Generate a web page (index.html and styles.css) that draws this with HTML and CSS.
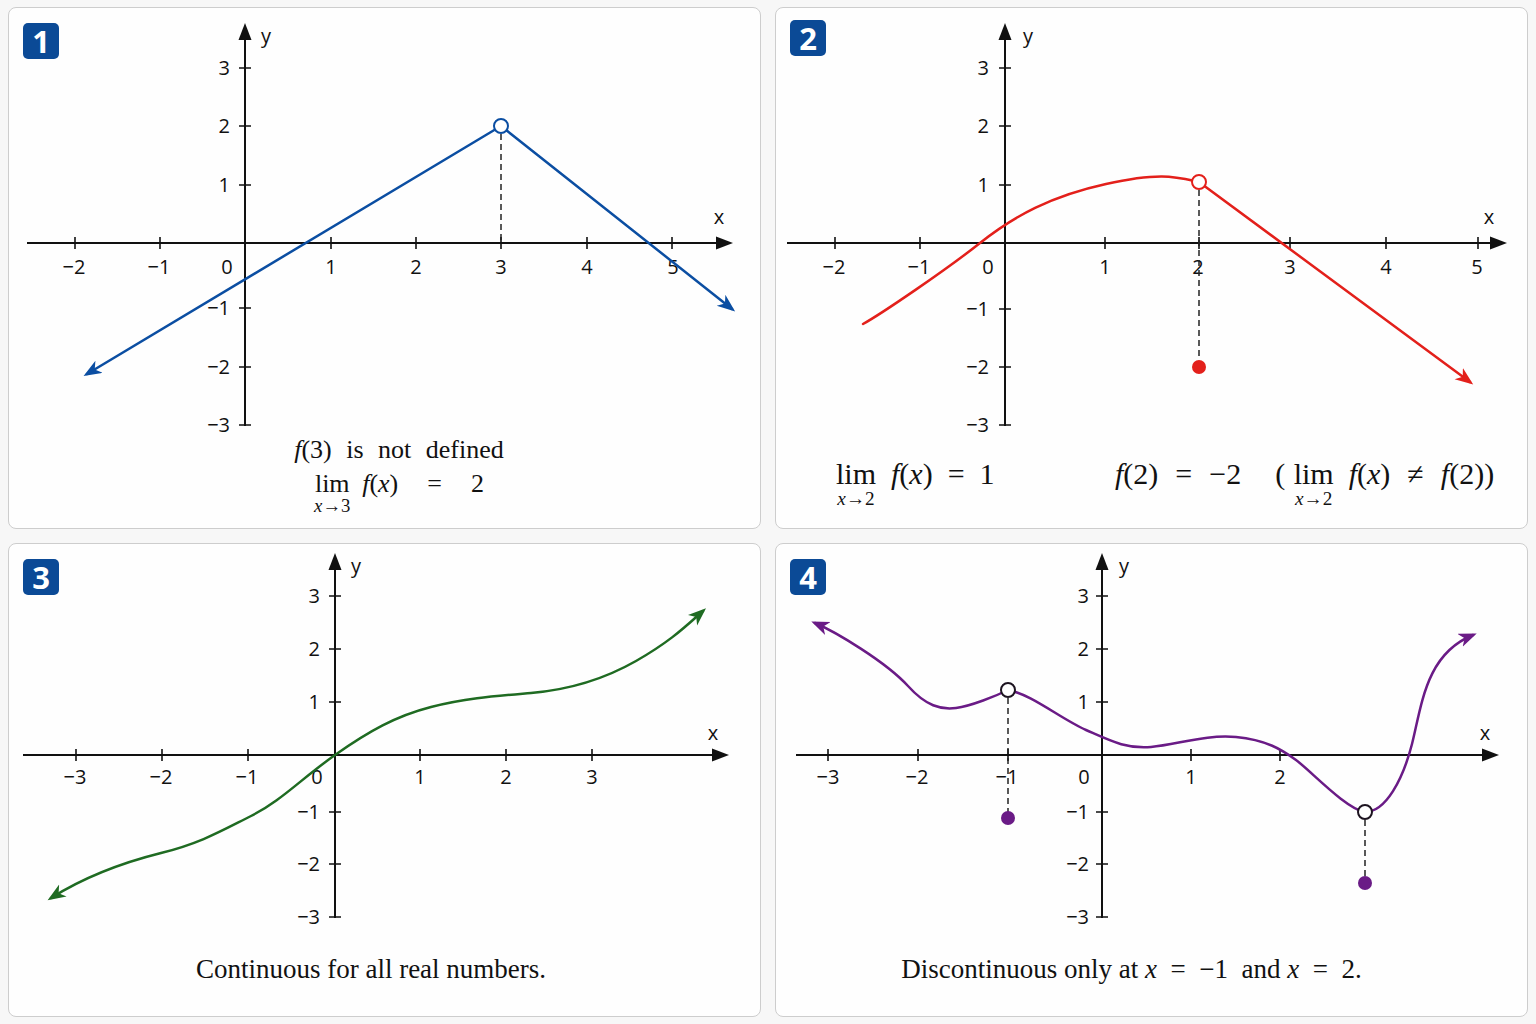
FILE: index.html
```html
<!DOCTYPE html>
<html lang="en">
<head>
<meta charset="utf-8">
<title>Continuity and limits</title>
<link rel="stylesheet" href="styles.css">
</head>
<body>
<div class="grid">

  <!-- Panel 1 -->
  <section class="panel">
    <div class="badge">1</div>
    <svg class="plot" width="751" height="432" viewBox="0 0 751 432">
      <defs>
        <marker id="ab" markerUnits="userSpaceOnUse" markerWidth="20" markerHeight="16" refX="14" refY="7" orient="auto-start-reverse">
          <path d="M0,0 L18,7 L0,14 L5,7 z" fill="#0b4ea2"/>
        </marker>
      </defs>
      <line class="axis" x1="18" y1="235" x2="712" y2="235"/>
      <polygon class="ah" points="724,235 707,228.5 707,241.5"/>
      <line class="axis" x1="236" y1="418" x2="236" y2="28"/>
      <polygon class="ah" points="236,15 229.5,32 242.5,32"/>
      <path class="tick" d="M230,60h12M230,118h12M230,177h12M230,300h12M230,359h12M230,417h12"/>
      <path class="tick" d="M66,229v12M151,229v12M322,229v12M407,229v12M492,229v12M578,229v12M663,229v12"/>
      <g class="tl tl1">
        <text x="221" y="67" text-anchor="end">3</text>
        <text x="221" y="125" text-anchor="end">2</text>
        <text x="221" y="184" text-anchor="end">1</text>
        <text x="221" y="307" text-anchor="end">−1</text>
        <text x="221" y="366" text-anchor="end">−2</text>
        <text x="221" y="424" text-anchor="end">−3</text>
        <text x="65" y="266" text-anchor="middle">−2</text>
        <text x="150" y="266" text-anchor="middle">−1</text>
        <text x="218" y="266" text-anchor="middle">0</text>
        <text x="322" y="266" text-anchor="middle">1</text>
        <text x="407" y="266" text-anchor="middle">2</text>
        <text x="492" y="266" text-anchor="middle">3</text>
        <text x="578" y="266" text-anchor="middle">4</text>
        <text x="664" y="266" text-anchor="middle">5</text>
        <text x="710" y="216" text-anchor="middle">x</text>
        <text x="257" y="35" text-anchor="middle">y</text>
      </g>
      <line class="dash" x1="492" y1="126" x2="492" y2="235"/>
      <path class="curve blue" d="M78,366 L492,118 L723,301" marker-start="url(#ab)" marker-end="url(#ab)"/>
      <circle class="hole" cx="492" cy="118" r="7" stroke="#0b4ea2"/>
    </svg>
    <div class="cap cap1">
      <div><i>f</i>(3) is not defined</div>
      <div><span class="lim"><span>lim</span><span class="sub"><i>x</i>→3</span></span><i>f</i>(<i>x</i>)&nbsp; = &nbsp;2</div>
    </div>
  </section>

  <!-- Panel 2 -->
  <section class="panel">
    <div class="badge b2">2</div>
    <svg class="plot" width="751" height="432" viewBox="0 0 751 432">
      <defs>
        <marker id="ar" markerUnits="userSpaceOnUse" markerWidth="20" markerHeight="16" refX="14" refY="7" orient="auto-start-reverse">
          <path d="M0,0 L18,7 L0,14 L5,7 z" fill="#e3201b"/>
        </marker>
      </defs>
      <line class="axis" x1="11" y1="235" x2="719" y2="235"/>
      <polygon class="ah" points="731,235 714,228.5 714,241.5"/>
      <line class="axis" x1="229" y1="418" x2="229" y2="28"/>
      <polygon class="ah" points="229,15 222.5,32 235.5,32"/>
      <path class="tick" d="M223,60h12M223,118h12M223,177h12M223,301h12M223,359h12M223,417h12"/>
      <path class="tick" d="M59,229v12M144,229v12M329,229v12M423,229v12M514,229v12M610,229v12M702,229v12"/>
      <g class="tl tlc">
        <text x="213" y="67" text-anchor="end">3</text>
        <text x="213" y="125" text-anchor="end">2</text>
        <text x="213" y="184" text-anchor="end">1</text>
        <text x="213" y="308" text-anchor="end">−1</text>
        <text x="213" y="366" text-anchor="end">−2</text>
        <text x="213" y="424" text-anchor="end">−3</text>
        <text x="58" y="266" text-anchor="middle">−2</text>
        <text x="143" y="266" text-anchor="middle">−1</text>
        <text x="212" y="266" text-anchor="middle">0</text>
        <text x="329" y="266" text-anchor="middle">1</text>
        <text x="422" y="266" text-anchor="middle">2</text>
        <text x="514" y="266" text-anchor="middle">3</text>
        <text x="610" y="266" text-anchor="middle">4</text>
        <text x="701" y="266" text-anchor="middle">5</text>
        <text x="713" y="216" text-anchor="middle">x</text>
        <text x="252" y="35" text-anchor="middle">y</text>
      </g>
      <line class="dash" x1="423" y1="182" x2="423" y2="352"/>
      <path class="curve red" d="M87,316 C105,306 170,262 204,235 S275,188 330,176 S400,169 423,174"/>
      <path class="curve red" d="M423,174 L694,374" marker-end="url(#ar)"/>
      <circle class="hole" cx="423" cy="174" r="7" stroke="#e3201b"/>
      <circle cx="423" cy="359" r="7" fill="#e3201b"/>
    </svg>
    <div class="cap cap2">
      <div class="c2a"><span class="lim"><span>lim</span><span class="sub"><i>x</i>→2</span></span><i>f</i>(<i>x</i>)&nbsp; = &nbsp;1</div>
      <div class="c2b"><i>f</i>(2)&nbsp; = &nbsp;−2&nbsp;&nbsp;&nbsp; (&nbsp;<span class="lim"><span>lim</span><span class="sub"><i>x</i>→2</span></span><i>f</i>(<i>x</i>)&nbsp; ≠ &nbsp;<i>f</i>(2))</div>
    </div>
  </section>

  <!-- Panel 3 -->
  <section class="panel">
    <div class="badge">3</div>
    <svg class="plot" width="751" height="386" viewBox="0 0 751 386">
      <defs>
        <marker id="ag" markerUnits="userSpaceOnUse" markerWidth="20" markerHeight="16" refX="14" refY="7" orient="auto-start-reverse">
          <path d="M0,0 L18,7 L0,14 L5,7 z" fill="#1f6b22"/>
        </marker>
      </defs>
      <line class="axis" x1="14" y1="211" x2="708" y2="211"/>
      <polygon class="ah" points="720,211 703,204.5 703,217.5"/>
      <line class="axis" x1="326" y1="374" x2="326" y2="22"/>
      <polygon class="ah" points="326,9 319.5,26 332.5,26"/>
      <path class="tick" d="M320,52h12M320,105h12M320,158h12M320,268h12M320,320h12M320,373h12"/>
      <path class="tick" d="M67,205v12M153,205v12M239,205v12M411,205v12M497,205v12M583,205v12"/>
      <g class="tl tlc">
        <text x="311" y="59" text-anchor="end">3</text>
        <text x="311" y="112" text-anchor="end">2</text>
        <text x="311" y="165" text-anchor="end">1</text>
        <text x="311" y="275" text-anchor="end">−1</text>
        <text x="311" y="327" text-anchor="end">−2</text>
        <text x="311" y="380" text-anchor="end">−3</text>
        <text x="66" y="240" text-anchor="middle">−3</text>
        <text x="152" y="240" text-anchor="middle">−2</text>
        <text x="238" y="240" text-anchor="middle">−1</text>
        <text x="308" y="240" text-anchor="middle">0</text>
        <text x="411" y="240" text-anchor="middle">1</text>
        <text x="497" y="240" text-anchor="middle">2</text>
        <text x="583" y="240" text-anchor="middle">3</text>
        <text x="704" y="196" text-anchor="middle">x</text>
        <text x="347" y="29" text-anchor="middle">y</text>
      </g>
      <path class="curve green" d="M42,354 C77,332 112,319 152,309 S212,287 242,272 S292,235 326,211 S387,172 422,163 S487,152 522,149 S592,137 627,117 S677,82 694,67" marker-start="url(#ag)" marker-end="url(#ag)"/>
    </svg>
    <div class="cap cap3">Continuous for all real numbers.</div>
  </section>

  <!-- Panel 4 -->
  <section class="panel">
    <div class="badge">4</div>
    <svg class="plot" width="751" height="386" viewBox="0 0 751 386">
      <defs>
        <marker id="ap" markerUnits="userSpaceOnUse" markerWidth="20" markerHeight="16" refX="14" refY="7" orient="auto-start-reverse">
          <path d="M0,0 L18,7 L0,14 L5,7 z" fill="#6a1b86"/>
        </marker>
      </defs>
      <line class="axis" x1="20" y1="211" x2="711" y2="211"/>
      <polygon class="ah" points="723,211 706,204.5 706,217.5"/>
      <line class="axis" x1="326" y1="374" x2="326" y2="22"/>
      <polygon class="ah" points="326,9 319.5,26 332.5,26"/>
      <path class="tick" d="M320,52h12M320,105h12M320,158h12M320,268h12M320,320h12M320,373h12"/>
      <path class="tick" d="M52,205v12M142,205v12M232,205v12M415,205v12M504,205v12"/>
      <g class="tl tlc">
        <text x="313" y="59" text-anchor="end">3</text>
        <text x="313" y="112" text-anchor="end">2</text>
        <text x="313" y="165" text-anchor="end">1</text>
        <text x="313" y="275" text-anchor="end">−1</text>
        <text x="313" y="327" text-anchor="end">−2</text>
        <text x="313" y="380" text-anchor="end">−3</text>
        <text x="52" y="240" text-anchor="middle">−3</text>
        <text x="141" y="240" text-anchor="middle">−2</text>
        <text x="231" y="240" text-anchor="middle">−1</text>
        <text x="308" y="240" text-anchor="middle">0</text>
        <text x="415" y="240" text-anchor="middle">1</text>
        <text x="504" y="240" text-anchor="middle">2</text>
        <text x="709" y="196" text-anchor="middle">x</text>
        <text x="348" y="29" text-anchor="middle">y</text>
      </g>
      <line class="dash" x1="232" y1="154" x2="232" y2="268"/>
      <line class="dash" x1="589" y1="276" x2="589" y2="333"/>
      <path class="curve purple" d="M39,79 C60,88 110,118 132,142 C150,162 165,166 180,164 C195,162 220,152 232,146" marker-start="url(#ap)"/>
      <path class="curve purple" d="M232,146 C255,150 285,175 310,186 S350,205 375,203 S430,190 460,193 S505,205 520,216 S570,265 589,268"/>
      <path class="curve purple" d="M589,268 C610,268 627,235 636,200 C646,160 650,110 697,91" marker-end="url(#ap)"/>
      <circle class="hole" cx="232" cy="146" r="7" stroke="#1d1420"/>
      <circle class="hole" cx="589" cy="268" r="7" stroke="#1d1420"/>
      <circle cx="232" cy="274" r="7" fill="#6a1b86"/>
      <circle cx="589" cy="339" r="7" fill="#6a1b86"/>
    </svg>
    <div class="cap cap4">Discontinuous only at <i>x</i>&nbsp; = &nbsp;−1&nbsp; and <i>x</i>&nbsp; = &nbsp;2.</div>
  </section>

</div>
</body>
</html>
```
FILE: styles.css
```css
* { box-sizing: border-box; }
html, body { margin: 0; }
body {
  background: #f7f7f7;
  padding: 7px 8px;
  font-family: "Liberation Serif", "DejaVu Serif", serif;
  color: #111;
}
.grid {
  display: grid;
  grid-template-columns: 753px 753px;
  grid-template-rows: 522px 474px;
  gap: 14px;
}
.panel {
  position: relative;
  background: #fefefe;
  border: 1px solid #cdcdcd;
  border-radius: 8px;
  display: flex;
  flex-direction: column;
  overflow: hidden;
}
.badge {
  position: absolute;
  left: 14px;
  top: 15px;
  width: 36px;
  height: 36px;
  background: #0b4a96;
  color: #fff;
  border-radius: 5px;
  font: 700 31px/36px "Open Sans", "Liberation Sans", sans-serif;
  text-align: center;
}
.badge.b2 { top: 12px; }
.plot { display: block; flex: none; }
.axis { stroke: #111; stroke-width: 2; fill: none; }
.ah { fill: #111; }
.tick { stroke: #111; stroke-width: 1.6; fill: none; }
.dash { stroke: #222; stroke-width: 1.5; stroke-dasharray: 6 4; }
.tl { fill: #111; }
.tl1 { font-family: "Open Sans", "DejaVu Sans", sans-serif; font-size: 20px; }
.tlc {
  font-family: "Open Sans", "DejaVu Sans", sans-serif;
  font-size: 20px;
}
.curve { fill: none; stroke-width: 2.5; stroke-linecap: round; stroke-linejoin: round; }
.blue { stroke: #0b4ea2; }
.red { stroke: #e3201b; }
.green { stroke: #1f6b22; }
.purple { stroke: #6a1b86; }
.hole { fill: #fff; stroke-width: 2; }

.cap { font-family: "Liberation Serif", "DejaVu Serif", serif; color: #111; }
.lim {
  display: inline-flex;
  flex-direction: column;
  align-items: center;
  line-height: 1;
  margin-right: 0.45em;
}
.lim .sub { font-size: 0.72em; line-height: 1; margin-top: 0; }

.cap1 {
  font-size: 26px;
  line-height: 34px;
  word-spacing: 8px;
  text-align: center;
  padding-left: 29px;
  margin-top: -7px;
}
.cap2 {
  font-size: 30px;
  display: grid;
  grid-template-columns: 279px auto;
  padding: 17px 0 0 60px;
  line-height: 34px;
}
.cap2 .c2b { word-spacing: 1px; }
.cap2 .lim { margin-right: 0.5em; }
.cap2 .lim .sub { font-size: 0.64em; }
.cap3, .cap4 {
  font-size: 27px;
  line-height: 30px;
  text-align: center;
  padding-top: 24px;
}
.cap3 { padding-right: 27px; }
.cap4 { padding-right: 40px; }
```
